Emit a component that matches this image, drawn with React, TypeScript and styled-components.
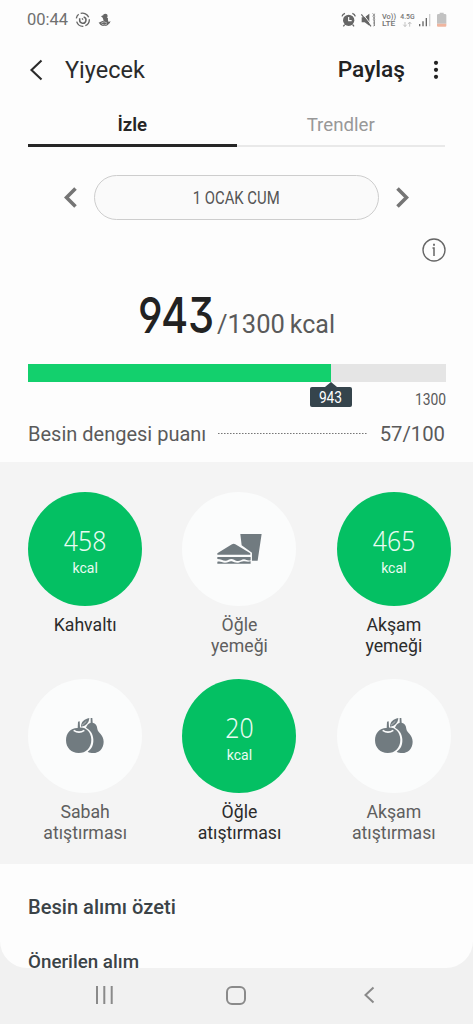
import React from "react";
import styled, { createGlobalStyle } from "styled-components";

const Global = createGlobalStyle`
  * { box-sizing: border-box; }
  body { margin: 0; background: #f1f1f1; font-family: Roboto, "Liberation Sans", sans-serif; }
`;

const Screen = styled.div`
  width: 473px;
  height: 1024px;
  display: flex;
  flex-direction: column;
  background: #f1f1f1;
  overflow: hidden;
`;

const Page = styled.main`
  height: 968px;
  display: flex;
  flex-direction: column;
  background: #fdfdfd;
  border-radius: 0 0 27px 27px;
`;

const Text = styled.span<{
  $size: number;
  $color?: string;
  $weight?: number;
  $stretch?: number;
  $origin?: string;
  $family?: string;
}>`
  display: inline-block;
  white-space: nowrap;
  font-size: ${(p) => p.$size}px;
  font-weight: ${(p) => p.$weight ?? 400};
  color: ${(p) => p.$color ?? "#5a5a5a"};
  font-family: ${(p) => p.$family ?? "inherit"};
  transform: scaleX(${(p) => p.$stretch ?? 1});
  transform-origin: ${(p) => p.$origin ?? "center"};
`;

const StatusBar = styled.header`
  height: 39px;
  flex: none;
  display: flex;
  align-items: center;
  justify-content: space-between;
  padding: 0 24px 0 27px;
`;

const StatusGroup = styled.div`
  display: flex;
  align-items: center;
  gap: 7px;
`;

const AppBar = styled.div`
  height: 62px;
  flex: none;
  display: flex;
  align-items: center;
  padding: 0 32px 1px 29px;
`;

const Title = styled.div`
  flex: 1;
  padding-left: 22px;
`;

const MoreButton = styled.div`
  margin-left: 26px;
  display: flex;
`;

const Tabs = styled.nav`
  height: 46px;
  flex: none;
  display: flex;
  margin: 0 28px;
`;

const Tab = styled.div<{ $active?: boolean }>`
  flex: 1;
  display: flex;
  align-items: center;
  justify-content: center;
  padding-top: 4px;
  border-bottom: ${(p) => (p.$active ? "3px solid #262626" : "2px solid #e9e9e9")};
`;

const DateRow = styled.div`
  display: flex;
  align-items: center;
  justify-content: center;
  gap: 17px;
  height: 45px;
  margin-top: 28px;
  flex: none;
`;

const DatePill = styled.div`
  width: 285px;
  height: 45px;
  border: 1px solid #cdcdcd;
  border-radius: 23px;
  background: #fafafa;
  display: flex;
  align-items: center;
  justify-content: center;
`;

const InfoRow = styled.div`
  height: 59px;
  flex: none;
  display: flex;
  justify-content: flex-end;
  align-items: center;
  padding-right: 27px;
`;

const Total = styled.div`
  height: 83px;
  flex: none;
  display: flex;
  align-items: baseline;
  line-height: 72px;
  padding-left: 138px;
`;

const TotalValue = styled.div`
  width: 79px;
  font-feature-settings: "cv04", "cv09";
`;

const Unit = styled.span`
  margin-left: 5px;
`;

const Track = styled.div`
  height: 18px;
  margin: 2px 27.5px 0;
  flex: none;
  background: #e5e5e5;
`;

const Fill = styled.div`
  height: 18px;
  background: #13d06d;
  display: flex;
  justify-content: flex-end;
`;

const Marker = styled.div`
  position: relative;
  width: 0;
`;

const Bubble = styled.div`
  position: absolute;
  top: 23px;
  left: -21px;
  width: 42px;
  height: 20px;
  border-radius: 2px;
  background: #35444c;
  display: flex;
  align-items: center;
  justify-content: center;
  &::before {
    content: "";
    position: absolute;
    top: -5px;
    left: 15px;
    border: 6px solid transparent;
    border-top: 0;
    border-bottom: 5px solid #35444c;
  }
`;

const Goal = styled.div`
  height: 35px;
  flex: none;
  display: flex;
  justify-content: flex-end;
  align-items: center;
  padding: 0 27px 0 0;
`;

const ScoreRow = styled.div`
  height: 45px;
  flex: none;
  display: flex;
  align-items: center;
  padding: 0 28px 11px;
`;

const Dots = styled.div`
  flex: 1;
  height: 1px;
  margin: -2px 12px 0 12px;
  background: repeating-linear-gradient(90deg, #777 0 1px, #b5b5b5 1px 2px, transparent 2px 3px);
`;

const Meals = styled.section`
  height: 402px;
  flex: none;
  background: #f4f4f4;
  padding: 30px 2px 0 8px;
  display: grid;
  grid-template-columns: repeat(3, 1fr);
  grid-auto-rows: 187px;
  align-content: start;
`;

const Meal = styled.div`
  display: flex;
  flex-direction: column;
  align-items: center;
`;

const Disc = styled.div<{ $filled: boolean }>`
  width: 114px;
  height: 114px;
  flex: none;
  border-radius: 50%;
  background: ${(p) => (p.$filled ? "#04c063" : "#fbfcfc")};
  display: flex;
  flex-direction: column;
  align-items: center;
  justify-content: center;
`;

const DiscNumber = styled.div`
  height: 28px;
  display: flex;
  align-items: center;
  margin-top: 6px;
`;

const DiscUnit = styled.div`
  height: 20px;
  display: flex;
  align-items: center;
  margin-top: 3px;
`;

const MealName = styled.div<{ $filled: boolean }>`
  margin-top: 9px;
  font-size: 17.7px;
  line-height: 21px;
  text-align: center;
  white-space: pre-line;
  color: ${(p) => (p.$filled ? "#2b2b2b" : "#5e5e5e")};
`;

const Summary = styled.section`
  padding: 31px 28px 0;
  display: flex;
  flex-direction: column;
  gap: 31px;
  line-height: 24px;
`;

const NavBar = styled.footer`
  height: 56px;
  display: flex;
  align-items: center;
  justify-content: space-between;
  padding: 0 98px 2px 95px;
`;

const HomeIcon = styled.svg`
  margin-right: 4px;
`;

const Fruit = () => (
  <svg width="40" height="37.3" viewBox="195 140 120 112">
    <g fill="#717b80">
      <path d="M272 143h5l1 14c9 2 13 8 14 18 1 12 19 17 19 39 0 22-15 34-31 34-7 0-12-1-17-4 13-8 18-21 17-37-1-17-9-28-22-35 3-8 7-13 14-15z" />
      <path d="M234 154l5-1 1 19c16-2 34 13 34 36 0 25-16 40-38 40s-38-15-38-38 15-38 35-37z" />
      <path d="M243 169c0-15 9-22 25-26-1 14-9 24-25 26z" />
    </g>
    <path d="M221 180q16 11 32 0" fill="none" stroke="#fbfcfc" strokeWidth="5" />
    <path d="M246 165l13-12" stroke="#fbfcfc" strokeWidth="1.5" />
  </svg>
);

const Sandwich = () => (
  <svg width="47.3" height="32" viewBox="137 162 142 96">
    <g fill="#717b80">
      <path d="M210 165h64l-12 80h-17v-24l-31-22z" />
      <path d="M141 227v-4l44-27q5-3 10 0l45 27v4z" />
      <path d="M141 234h100v10c-9 3-13-3-20-3-8 0-12 7-21 5-7-2-10-6-17-6s-10 5-17 5c-10 0-14-5-25-5z" />
      <path d="M141 248c10-2 13 2 23 3 10 0 13-5 20-4 7 2 11 5 20 4 7-1 11-5 18-4 8 1 12 2 19 0v7h-100z" />
    </g>
  </svg>
);

const Chevron = ({ w, h, stroke, color, right }: { w: number; h: number; stroke: number; color: string; right?: boolean }) => (
  <svg width={w} height={h} viewBox={`0 0 ${w} ${h}`} fill="none" stroke={color} strokeWidth={stroke}>
    <path d={right ? `M1.5 1.5L${w - 2.5} ${h / 2}L1.5 ${h - 1.5}` : `M${w - 1.5} 1.5L2.5 ${h / 2}L${w - 1.5} ${h - 1.5}`} />
  </svg>
);

const NoticeIcons = () => (
  <svg width="36" height="16" viewBox="225 33 108 48" fill="none" stroke="#666">
    <path d="M229 52a20 20 0 0 1 7-12M242 37a20 20 0 0 1 24 12M268 55a20 20 0 0 1-12 19M250 76a20 20 0 0 1-20-14" strokeWidth="4" />
    <path d="M239 52v4a9.500 9.500 0 1 0 12-8" strokeWidth="4.500" />
    <path d="M246 52l3 4" strokeWidth="4" />
    <g fill="#666" stroke="none">
      <circle cx="316" cy="45" r="7" />
      <path d="M309 43l-6 3 5 4 3 9c-9 1-12 7-15 5 3 8 9 12 18 11 8 0 12-4 16-11-5 1-7-5-6-12z" />
    </g>
    <path d="M303 67q9-9 18-1M306 70q8 5 15-1" stroke="#fafafa" strokeWidth="1.6" />
    <path d="M322 65q8 4 8-4" strokeWidth="3" />
  </svg>
);

const SystemIcons = () => (
  <svg width="108" height="18" viewBox="87 30 324 54" fill="none">
    <circle cx="110" cy="58" r="17" fill="#666" />
    <path d="M90 46q2-7 9-9M121 37q7 2 9 9M98 71l-4 5M122 71l4 5" stroke="#666" strokeWidth="4" />
    <path d="M110 48v11h9" stroke="#fff" strokeWidth="3.5" />
    <path d="M149 49h9l14-11v36l-14-10h-9z" fill="#666" />
    <path d="M152 38l27 35" stroke="#fcfcfc" strokeWidth="3" />
    <path d="M148 40l29 36" stroke="#666" strokeWidth="3.5" />
    <path d="M182 37q6 4 1 9 6 5 1 10 6 5 1 10 5 5 0 10M188 38q-3 4 0 8-3 5 0 10-3 5 0 10-3 5 0 9" stroke="#777" strokeWidth="2.4" />
    <g fill="#747474" fontFamily="Roboto, sans-serif" fontWeight="500">
      <text x="210" y="53" fontSize="21" textLength="42" lengthAdjust="spacingAndGlyphs">Vo))</text>
      <text x="210" y="75" fontSize="22" textLength="40" lengthAdjust="spacingAndGlyphs">LTE</text>
      <text x="265" y="53" fontSize="20" textLength="43" lengthAdjust="spacingAndGlyphs">4.5G</text>
    </g>
    <path d="M279 63v13M274 71l5 6 5-6M293 77V64M288 69l5-6 5 6" stroke="#b8b8b8" strokeWidth="2.5" />
    <path d="M323 69v7M333 61v15M343 51v25" stroke="#666" strokeWidth="4" />
    <path d="M353 39v37" stroke="#cfcfcf" strokeWidth="4" />
    <path d="M375 42q0-3 4-3h4v-4h12v4h4q4 0 4 3v26h-28z" fill="#c2c2c2" />
    <path d="M375 68h28v6q0 3-3 3h-22q-3 0-3-3z" fill="#efb59f" />
  </svg>
);

const meals = [
  { name: "Kahvaltı", kcal: 458 },
  { name: "Öğle\nyemeği", icon: <Sandwich /> },
  { name: "Akşam\nyemeği", kcal: 465 },
  { name: "Sabah\natıştırması", icon: <Fruit /> },
  { name: "Öğle\natıştırması", kcal: 20 },
  { name: "Akşam\natıştırması", icon: <Fruit /> },
];

const consumed = 943;
const goal = 1300;

export default function App() {
  return (
    <Screen>
      <Global />
      <Page>
        <StatusBar>
          <StatusGroup>
            <Text $size={16.5} $color="#707070">00:44</Text>
            <NoticeIcons />
          </StatusGroup>
          <SystemIcons />
        </StatusBar>
        <AppBar>
          <Chevron w={14} h={22} stroke={2.1} color="#2b2b2b" />
          <Title>
            <Text $size={23.5} $color="#2b2b2b">Yiyecek</Text>
          </Title>
          <Text $size={22.7} $weight={500} $color="#222">Paylaş</Text>
          <MoreButton>
            <svg width="10" height="20" viewBox="0 0 10 20" fill="#222">
              <circle cx="5" cy="2.8" r="2.1" />
              <circle cx="5" cy="9.8" r="2.1" />
              <circle cx="5" cy="16.8" r="2.1" />
            </svg>
          </MoreButton>
        </AppBar>
        <Tabs>
          <Tab $active>
            <Text $size={18.7} $weight={600} $color="#262626">İzle</Text>
          </Tab>
          <Tab>
            <Text $size={18.7} $color="#989898">Trendler</Text>
          </Tab>
        </Tabs>
        <DateRow>
          <Chevron w={13} h={21} stroke={3.6} color="#757575" />
          <DatePill>
            <Text $size={17.5} $stretch={0.85} $color="#555">1 OCAK CUM</Text>
          </DatePill>
          <Chevron w={13} h={21} stroke={3.6} color="#757575" right />
        </DateRow>
        <InfoRow>
          <svg width="24" height="24" viewBox="0 0 24 24" fill="none" stroke="#666">
            <circle cx="12" cy="12" r="11" strokeWidth="1.4" />
            <path d="M10.5 10h1.5v8" strokeWidth="1.5" />
            <path d="M12 5.7v2" strokeWidth="1.8" />
          </svg>
        </InfoRow>
        <Total>
          <TotalValue>
            <Text $size={50} $weight={450} $color="#222" $stretch={0.83} $origin="left" $family="Inter, sans-serif">943</Text>
          </TotalValue>
          <Text $size={25.5}>/1300</Text>
          <Unit>
            <Text $size={25} $origin="left">kcal</Text>
          </Unit>
        </Total>
        <Track>
          <Fill style={{ width: `${(consumed / goal) * 100}%` }}>
            <Marker>
              <Bubble>
                <Text $size={16} $stretch={0.86} $color="#fff">943</Text>
              </Bubble>
            </Marker>
          </Fill>
        </Track>
        <Goal>
          <Text $size={16.5} $stretch={0.84} $origin="right">1300</Text>
        </Goal>
        <ScoreRow>
          <Text $size={20}>Besin dengesi puanı</Text>
          <Dots />
          <Text $size={20.3}>57/100</Text>
        </ScoreRow>
        <Meals>
          {meals.map((m) => (
            <Meal key={m.name}>
              <Disc $filled={m.kcal !== undefined}>
                {m.icon ?? (
                  <>
                    <DiscNumber>
                      <Text $size={27} $stretch={0.92} $weight={350} $color="#e9fbf2" $family={'"Noto Sans", sans-serif'}>{m.kcal}</Text>
                    </DiscNumber>
                    <DiscUnit>
                      <Text $size={14} $color="#e9fbf2">kcal</Text>
                    </DiscUnit>
                  </>
                )}
              </Disc>
              <MealName $filled={m.kcal !== undefined}>{m.name}</MealName>
            </Meal>
          ))}
        </Meals>
        <Summary>
          <Text $size={20.1} $weight={500} $color="#3b4347">Besin alımı özeti</Text>
          <Text $size={18.8} $weight={500} $color="#3b4347">Önerilen alım</Text>
        </Summary>
      </Page>
      <NavBar>
        <svg width="18" height="18" viewBox="0 0 18 18" stroke="#8a8a8a" strokeWidth="2">
          <path d="M2 0v18M9.3 0v18M16.7 0v18" />
        </svg>
        <HomeIcon width="20" height="19" viewBox="0 0 20 19" fill="none" stroke="#8a8a8a" strokeWidth="2">
          <rect x="1" y="1" width="18" height="17" rx="5" />
        </HomeIcon>
        <Chevron w={12} h={18} stroke={2} color="#8a8a8a" />
      </NavBar>
    </Screen>
  );
}
